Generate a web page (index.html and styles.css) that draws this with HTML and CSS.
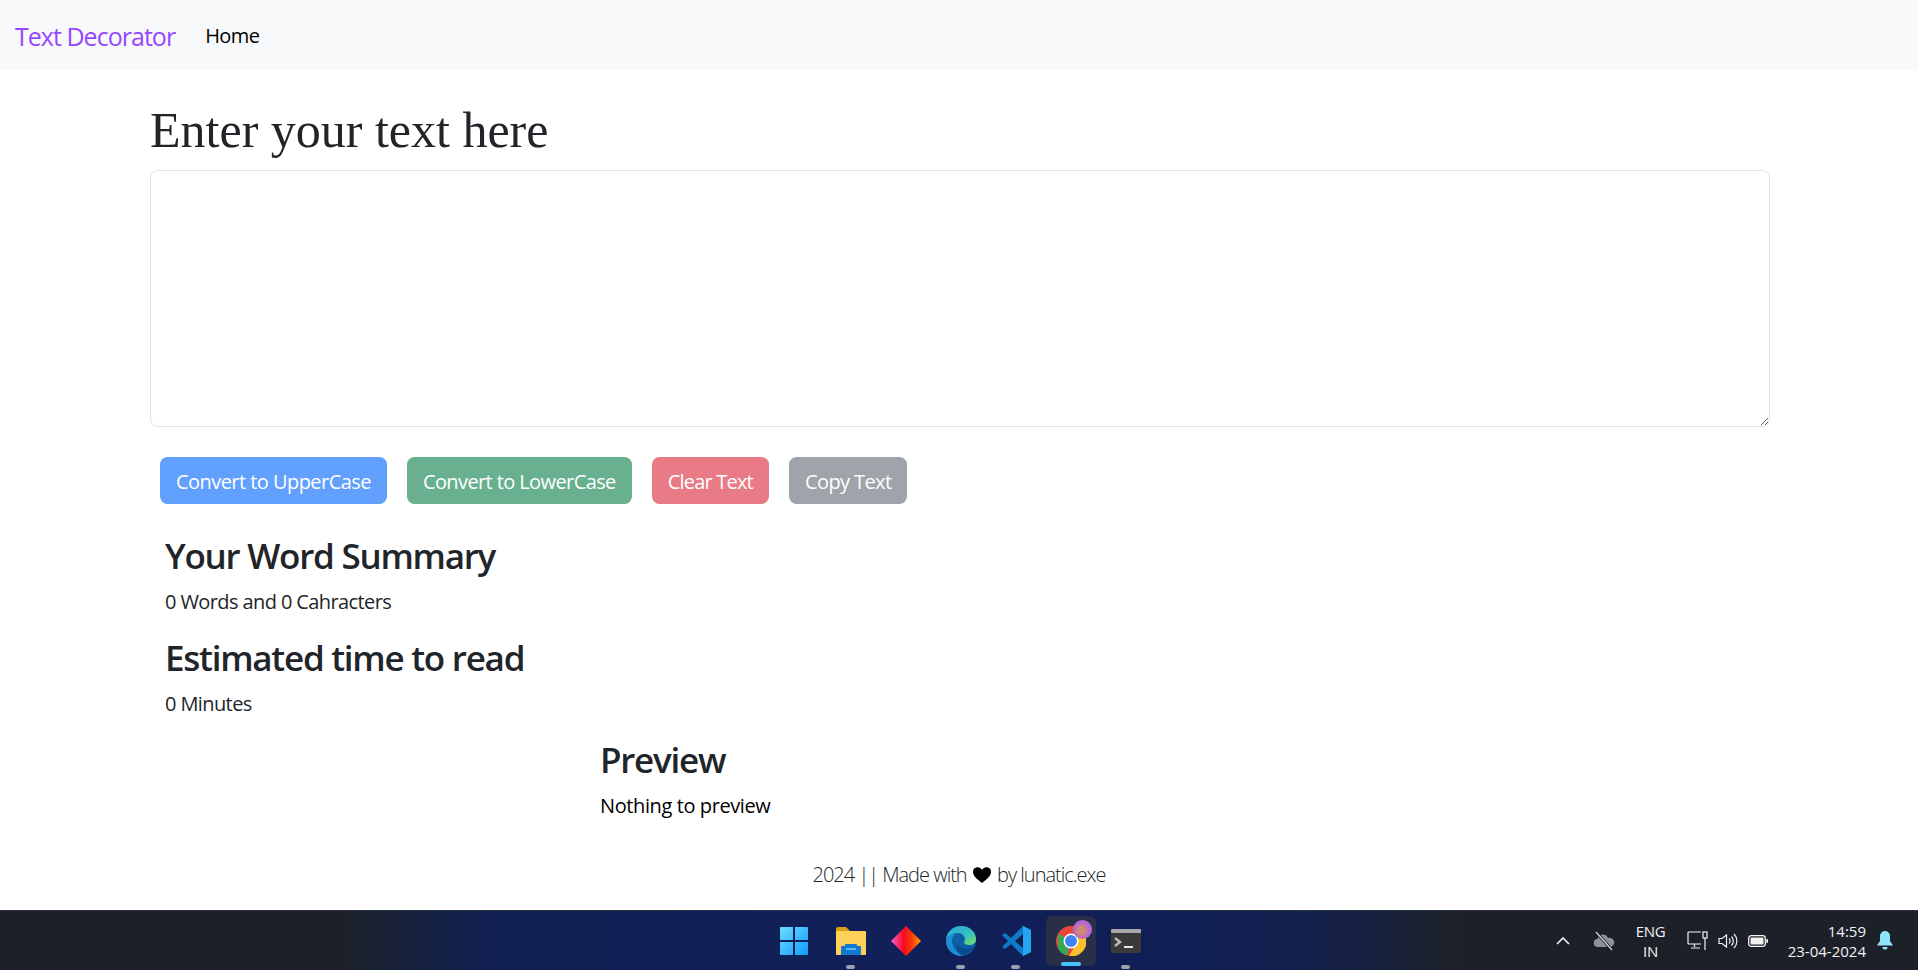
FILE: index.html
```html
<!DOCTYPE html>
<html lang="en">
<head>
    <meta charset="UTF-8">
    <meta name="viewport" content="width=device-width, initial-scale=1.0">
    <title>Text Decorator</title>
    <link rel="stylesheet" href="styles.css">
</head>
<body>
    <div class="page">
        <nav class="navbar">
            <a class="brand" href="#">Text Decorator</a>
            <a class="nav-link" href="#">Home</a>
        </nav>

        <div class="container">
            <h1 class="title">Enter your text here</h1>
            <textarea class="text-box"></textarea>

            <div class="buttons">
                <button class="btn btn-blue">Convert to UpperCase</button>
                <button class="btn btn-green">Convert to LowerCase</button>
                <button class="btn btn-red">Clear Text</button>
                <button class="btn btn-gray">Copy Text</button>
            </div>

            <div class="summary">
                <h2>Your Word Summary</h2>
                <p>0 Words and 0 Cahracters</p>
                <h2>Estimated time to read</h2>
                <p>0 Minutes</p>
            </div>

            <div class="preview">
                <h2>Preview</h2>
                <p>Nothing to preview</p>
            </div>
        </div>

        <footer class="footer">
            2024 || Made with
            <svg class="heart" width="18" height="16" viewBox="0 0 18 16">
                <path d="M9 16C5 12.500 0 9.500 0 5a4.800 4.800 0 0 1 9-2.300A4.800 4.800 0 0 1 18 5c0 4.500-5 7.500-9 11z" fill="#000"/>
            </svg>
            by lunatic.exe
        </footer>
    </div>

    <div class="taskbar">
        <div class="task-icons">
            <div class="task-item start">
                <svg width="30" height="30" viewBox="0 0 30 30">
                    <defs>
                        <linearGradient id="win" x1="0" y1="0" x2="1" y2="1">
                            <stop offset="0" stop-color="#6fdcff"/>
                            <stop offset="1" stop-color="#0f9bff"/>
                        </linearGradient>
                    </defs>
                    <path d="M1 2a1 1 0 0 1 1-1h12v13H1zM16 1h12a1 1 0 0 1 1 1v12H16zM1 16h13v13H2a1 1 0 0 1-1-1zM16 16h13v12a1 1 0 0 1-1 1H16z" fill="url(#win)"/>
                </svg>
            </div>
            <div class="task-item open">
                <svg width="32" height="30" viewBox="0 0 32 30">
                    <path d="M1 3a2 2 0 0 1 2-2h8l4 4h-14z" fill="#d9a011"/>
                    <path d="M1 5h29a1 1 0 0 1 1 1v22a1 1 0 0 1-1 1H2a1 1 0 0 1-1-1z" fill="#fdd158"/>
                    <path d="M6 21a1 1 0 0 1 1-1h2.500l1-2h11l1 2H25a1 1 0 0 1 1 1v8H6z" fill="#0f7ad0"/>
                    <rect x="11" y="22" width="10" height="2" fill="#5cb8f2"/>
                </svg>
            </div>
            <div class="task-item">
                <svg width="30" height="30" viewBox="0 0 30 30">
                    <defs>
                        <linearGradient id="gem" x1="0" y1="0" x2="1" y2="0">
                            <stop offset="0" stop-color="#f95fd0"/>
                            <stop offset=".42" stop-color="#f80a22"/>
                            <stop offset=".7" stop-color="#fb3a06"/>
                            <stop offset="1" stop-color="#fda40a"/>
                        </linearGradient>
                    </defs>
                    <path d="M15 0l15 15-15 15L0 15z" fill="url(#gem)"/>
                </svg>
            </div>
            <div class="task-item open">
                <svg width="30" height="30" viewBox="0 0 30 30">
                    <defs>
                        <linearGradient id="edgeTop" x1="0" y1="0" x2="1" y2="1">
                            <stop offset="0" stop-color="#2aa3d8"/>
                            <stop offset=".6" stop-color="#35c1c0"/>
                            <stop offset="1" stop-color="#7ee25e"/>
                        </linearGradient>
                    </defs>
                    <circle cx="15" cy="15" r="15" fill="#0f5fa6"/>
                    <path d="M0 15C0 6 7 0 15 0c9 0 15 6 15 13 0 4-3 6-7 6-3 0-5-1-5-3 0-1 1-1.500 1-3 0-3-3-6-7-6C6 7 1 10 0 15z" fill="url(#edgeTop)"/>
                    <path d="M0 15c1-5 6-8 10-8-3 2-4 5-4 8 0 6 5 12 11 14-1 .5-2 1-2 1C7 30 0 23 0 15z" fill="#1b8fd3"/>
                    <path d="M12 17c0 4 4 6 8 6 3 0 6-1 8-3-2 5-7 9-13 9-4-2-6-7-3-12z" fill="#0c4a8f"/>
                </svg>
            </div>
            <div class="task-item open">
                <svg width="30" height="30" viewBox="0 0 30 30">
                    <path d="M22 0l8 4v22l-8 4-12-12-6 5-3-2 6-6-6-6 3-2 6 5z" fill="#0c7cc9"/>
                    <path d="M22 0l8 4v22l-8 4z" fill="#24a5ef"/>
                    <path d="M22 8l-8 7 8 7z" fill="#101f50"/>
                </svg>
            </div>
            <div class="task-item active">
                <svg width="30" height="30" viewBox="0 0 30 30">
                    <circle cx="15" cy="15" r="15" fill="#e8453c"/>
                    <path d="M2 7.500L2 22.500A15 15 0 0 0 11 29.500L15 15z" fill="#34a853"/>
                    <path d="M15 8.500H29A15 15 0 0 1 13 30L20 18z" fill="#fbc02d"/>
                    <circle cx="15" cy="15" r="7.500" fill="#fff"/>
                    <circle cx="15" cy="15" r="6" fill="#3f84f0"/>
                </svg>
                <span class="avatar"></span>
            </div>
            <div class="task-item open">
                <svg width="30" height="24" viewBox="0 0 30 24">
                    <rect width="30" height="24" rx="1.500" fill="#3a3a3a"/>
                    <rect width="30" height="4" rx="1" fill="#a8a8a8"/>
                    <path d="M4 9l5 4-5 4" fill="none" stroke="#b9b9b9" stroke-width="2.500"/>
                    <rect x="13" y="17" width="9" height="2" fill="#e6e6e6"/>
                </svg>
            </div>
        </div>

        <div class="tray">
            <svg class="tray-chevron" width="14" height="8" viewBox="0 0 14 8">
                <path d="M1 7l6-6 6 6" fill="none" stroke="#f2f2f2" stroke-width="1.600"/>
            </svg>
            <svg class="tray-cloud" width="22" height="20" viewBox="0 0 22 20">
                <path d="M5 16a4 4 0 0 1-.5-8 5.500 5.500 0 0 1 10.500-1 4.500 4.500 0 0 1 3 9z" fill="#8d9097"/>
                <path d="M3 1l16 18" stroke="#1c2128" stroke-width="3"/>
                <path d="M3 1l16 18" stroke="#d8d8d8" stroke-width="1.200"/>
            </svg>
            <div class="lang"><span>ENG</span><span>IN</span></div>
            <div class="tray-status">
                <svg width="21" height="21" viewBox="0 0 21 21" fill="none" stroke="#f2f2f2" stroke-width="1.200">
                    <path d="M14 14H2a1 1 0 0 1-1-1V3a1 1 0 0 1 1-1h12"/>
                    <path d="M7.500 14v3M4 18h9"/>
                    <rect x="16" y="2" width="4" height="6"/>
                    <path d="M18 8v12"/>
                </svg>
                <svg width="20" height="18" viewBox="0 0 20 18" fill="none" stroke="#f2f2f2" stroke-width="1.200">
                    <path d="M1 6.500h3L8.500 3v12L4 11.500H1z"/>
                    <path d="M11 6.500a3.500 3.500 0 0 1 0 5M13.500 4.500a6.500 6.500 0 0 1 0 9M16 2a10 10 0 0 1 0 14"/>
                </svg>
                <svg width="20" height="12" viewBox="0 0 20 12">
                    <rect x=".7" y=".7" width="16.600" height="10.600" rx="2.500" fill="none" stroke="#f2f2f2" stroke-width="1.300"/>
                    <rect x="2.500" y="2.500" width="13" height="7" rx="1" fill="#f2f2f2"/>
                    <rect x="18.300" y="4" width="1.700" height="4" rx=".8" fill="#f2f2f2"/>
                </svg>
            </div>
            <div class="clock"><span>14:59</span><span>23-04-2024</span></div>
            <svg class="tray-bell" width="16" height="20" viewBox="0 0 16 20">
                <path d="M8 0a5 5 0 0 1 5 5v5l3 4.500H0L3 10V5a5 5 0 0 1 5-5z" fill="#8fe3fb"/>
                <path d="M5.500 16h5a2.500 2.500 0 0 1-5 0z" fill="#8fe3fb"/>
            </svg>
        </div>
    </div>
</body>
</html>
```

FILE: styles.css
```css
* {
    box-sizing: border-box;
}

body {
    margin: 0;
    height: 970px;
    overflow: hidden;
    font-family: 'Open Sans', 'Noto Sans', sans-serif;
    font-size: 20px;
    line-height: 30px;
    color: #212529;
    background: #fff;
    display: flex;
    flex-direction: column;
}

.page {
    height: 910px;
}

.navbar {
    height: 70px;
    padding: 1px 15px 0;
    display: flex;
    align-items: center;
    background: #f8f9fa;
}

.brand {
    font-size: 25px;
    letter-spacing: -0.97px;
    color: #9747ff;
    text-decoration: none;
    margin-right: 30px;
}

.nav-link {
    color: #000;
    text-decoration: none;
    letter-spacing: -0.6px;
}

.container {
    width: 1650px;
    margin: 0 auto;
    padding: 30px 14px 0 16px;
}

.title {
    margin: 0 0 10px;
    font-family: 'Liberation Serif', 'Times New Roman', serif;
    font-size: 50px;
    font-weight: 400;
    line-height: 60px;
}

.text-box {
    display: block;
    width: 100%;
    height: 257px;
    border: 1px solid #dee2e6;
    border-radius: 7.5px;
    background: #fff;
}

.buttons {
    display: flex;
    gap: 20px;
    margin: 30px 0 0 10px;
}

.btn {
    height: 47px;
    padding: 1px 15px 0;
    border: 1px solid transparent;
    border-radius: 7.5px;
    font-family: inherit;
    font-size: 20px;
    letter-spacing: -0.6px;
    color: #fff;
    opacity: 0.65;
}

.btn-blue {
    background: #0d6efd;
    letter-spacing: -0.55px;
}

.btn-green {
    background: #198754;
    letter-spacing: -0.6px;
}

.btn-red {
    background: #dc3545;
    letter-spacing: -0.8px;
}

.btn-gray {
    background: #6c757d;
}

.summary {
    margin: 31px 0 0 15px;
}

.preview {
    margin: 20px 0 0 450px;
}

h2 {
    margin: 0 0 10px;
    font-size: 35px;
    font-weight: 600;
    line-height: 42px;
    letter-spacing: -1.25px;
}

p {
    margin: 0 0 20px;
    letter-spacing: -0.6px;
}

.preview p {
    color: #000;
    letter-spacing: -0.4px;
}

.footer {
    margin-top: 39px;
    text-align: center;
    font-weight: 300;
    letter-spacing: -1px;
    color: #212529;
}

.heart {
    margin: 0 2px;
    vertical-align: -1px;
}

.taskbar {
    position: relative;
    height: 60px;
    flex-shrink: 0;
    display: flex;
    justify-content: center;
    border-top: 1px solid #2c3345;
    background: linear-gradient(to right, #1c2129 0, #1c2129 18%, #101f50 25%, #12205a 45%, #0f1f55 60%, #14204e 68%, #1c2129 76%, #1c2129 100%);
}

.task-icons {
    display: flex;
    align-items: flex-start;
    gap: 5px;
    padding-top: 5px;
    margin-left: 3px;
}

.task-item {
    position: relative;
    width: 50px;
    height: 50px;
    border-radius: 6px;
    display: flex;
    align-items: center;
    justify-content: center;
}

.task-item.start {
    padding-right: 3px;
}

.task-item.open::after,
.task-item.active::after {
    content: "";
    position: absolute;
    bottom: -3px;
    left: 20px;
    width: 9px;
    height: 4px;
    border-radius: 2px;
    background: #9aa0ae;
}

.task-item.active {
    background: #2a2f48;
}

.task-item.active::after {
    left: 15px;
    width: 20px;
    bottom: 0;
    background: #47c1fb;
}

.avatar {
    position: absolute;
    top: 4px;
    right: 4px;
    width: 19px;
    height: 19px;
    border-radius: 50%;
    background: radial-gradient(circle at 45% 55%, #d08a70 0 20%, #b466d2 55%);
}

.tray {
    position: absolute;
    top: 0;
    right: 0;
    height: 100%;
    width: 365px;
    display: flex;
    align-items: center;
    color: #f2f2f2;
    font-size: 15px;
    line-height: 20px;
    font-family: 'Open Sans', sans-serif;
}

.tray-chevron {
    margin-left: 3px;
    margin-right: 23px;
}

.tray-cloud {
    margin-right: 21px;
}

.lang {
    width: 29px;
    display: flex;
    flex-direction: column;
    align-items: center;
    letter-spacing: -0.3px;
    margin-right: 22px;
}

.tray-status {
    display: flex;
    align-items: center;
    gap: 10px;
}

.clock {
    width: 98px;
    display: flex;
    flex-direction: column;
    align-items: flex-end;
    letter-spacing: 0;
}

.tray-bell {
    margin-left: 11px;
}
```
